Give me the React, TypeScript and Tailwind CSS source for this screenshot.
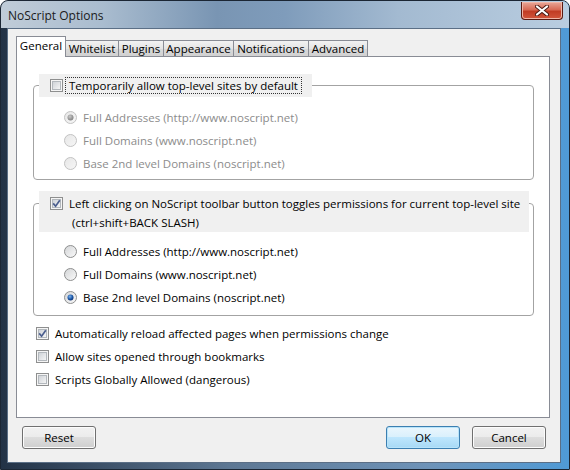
import { useId } from "react";

const font = "font-['Open_Sans',sans-serif]";

function CheckBox({ checked = false }: { checked?: boolean }) {
  const id = useId();
  return (
    <svg width="13" height="13" viewBox="0 0 13 13" className="shrink-0">
      <defs>
        <linearGradient id={id} x1="0" y1="0" x2="1" y2="1">
          <stop offset="0" stopColor="#cdd1d6" />
          <stop offset="1" stopColor="#f7f7f7" />
        </linearGradient>
      </defs>
      <rect x="0.5" y="0.5" width="12" height="12" fill="#f5f5f5" stroke="#8e8f8f" />
      <rect x="2.5" y="2.5" width="8" height="8" fill={`url(#${id})`} stroke="#b3b8bd" />
      {checked && <path d="M3.2 6.4 L5.6 9.2 L9.8 3.2" fill="none" stroke="#4b5e8e" strokeWidth="1.7" />}
    </svg>
  );
}

function Radio({ selected = false, disabled = false }: { selected?: boolean; disabled?: boolean }) {
  const id = useId();
  return (
    <svg width="13" height="13" viewBox="0 0 13 13" className="shrink-0">
      <defs>
        <linearGradient id={`${id}a`} x1="0" y1="0" x2="1" y2="1">
          <stop offset="0" stopColor={disabled ? "#e6e6e6" : "#d2d4d6"} />
          <stop offset="1" stopColor={disabled ? "#f7f7f7" : "#fbfbfb"} />
        </linearGradient>
        <radialGradient id={`${id}b`} cx="0.4" cy="0.35" r="0.7">
          <stop offset="0" stopColor={disabled ? "#c8c8c8" : "#7db2ea"} />
          <stop offset="0.6" stopColor={disabled ? "#9a9a9a" : "#1c58a8"} />
          <stop offset="1" stopColor={disabled ? "#808080" : "#0b2d6a"} />
        </radialGradient>
      </defs>
      <circle cx="6.5" cy="6.5" r="6" fill={`url(#${id}a)`} stroke={disabled ? "#c2c2c2" : "#8e8f8f"} />
      {selected && <circle cx="6.5" cy="6.5" r="3" fill={`url(#${id}b)`} />}
    </svg>
  );
}

function RadioRow({ label, selected, disabled }: { label: string; selected?: boolean; disabled?: boolean }) {
  return (
    <div className="flex h-[23px] items-center gap-[6px] pl-[30px]">
      <Radio selected={selected} disabled={disabled} />
      <span className={disabled ? "text-[#8c8c8c]" : "text-black"}>{label}</span>
    </div>
  );
}

function CheckRow({ label, checked }: { label: string; checked?: boolean }) {
  return (
    <div className="flex h-[23px] items-center gap-[6px] pl-[19px]">
      <CheckBox checked={checked} />
      <span>{label}</span>
    </div>
  );
}

function Button({ label, primary }: { label: string; primary?: boolean }) {
  return (
    <button
      type="button"
      className={`h-[23px] w-[74px] rounded-[3px] border text-black ${
        primary
          ? "border-[#3c7fb1] bg-[linear-gradient(#eaf6fd_0%,#d9f0fc_50%,#bee6fd_50%,#a7d9f5_100%)] shadow-[inset_0_0_0_1px_#b8e4fa]"
          : "border-[#707070] bg-[linear-gradient(#f2f2f2_0%,#ebebeb_50%,#dddddd_50%,#cfcfcf_100%)] shadow-[inset_0_0_0_1px_#fcfcfc]"
      }`}
    >
      {label}
    </button>
  );
}

const tabs = [
  { name: "General", w: "w-[50px]" },
  { name: "Whitelist", w: "w-[54px]" },
  { name: "Plugins", w: "w-[46px]" },
  { name: "Appearance", w: "w-[71px]" },
  { name: "Notifications", w: "w-[76px]" },
  { name: "Advanced", w: "w-[60px]" },
];

export default function App() {
  return (
    <div className={`${font} text-[11.5px] leading-none text-black`}>
      <div className="flex h-[470px] w-[570px] flex-col overflow-hidden rounded-t-[8px] border border-[#1b2634] bg-[linear-gradient(90deg,#223246_0%,#5d7793_40%,#6e93b8_75%,#4f9ad6_100%)]">
        <div className="flex h-[27px] shrink-0 items-center justify-between bg-[linear-gradient(90deg,#c0ccd8_0%,#a9bccf_18%,#7995b3_38%,#7f9cbb_50%,#a3bad1_70%,#b9cde0_100%)] pl-[7px] pr-[6px]">
          <span className="pt-[2px] text-[12px] text-[#1a1a1a]">NoScript Options</span>
          <div className="mb-[7px] flex h-[18px] w-[42px] items-center justify-center rounded-b-[4px] border border-t-0 border-[#5a1a12] bg-[linear-gradient(#e9a899_0%,#d86a55_45%,#c13c24_55%,#d2563c_100%)] shadow-[inset_0_0_0_1px_#f0b6a8]">
            <svg width="14" height="11" viewBox="0 0 14 11">
              <path d="M2 1.5 L12 9.5 M12 1.5 L2 9.5" stroke="#4a1a14" strokeWidth="4" strokeLinecap="round" />
              <path d="M2 1.5 L12 9.5 M12 1.5 L2 9.5" stroke="#ffffff" strokeWidth="2.2" strokeLinecap="round" />
            </svg>
          </div>
        </div>
        <div className="flex flex-1 px-[6px] pb-[6px] pr-[8px]">
          <div className="flex flex-1 flex-col border border-[#5b6f86] bg-[#f0f0f0] pl-[8px] pr-[10px] pt-[7px]">
            <div className="flex h-[21px] items-end">
              {tabs.map((t, i) =>
                i === 0 ? (
                  <div
                    key={t.name}
                    className={`relative z-10 flex h-[21px] ${t.w} items-center justify-center border border-b-0 border-[#898c95] bg-white pb-[2px]`}
                  >
                    {t.name}
                  </div>
                ) : (
                  <div
                    key={t.name}
                    className={`flex h-[17px] ${t.w} -ml-px items-center justify-center border border-b-0 border-[#898c95] bg-[linear-gradient(#f2f2f2,#e3e3e3_50%,#d9d9d9_50%,#d0d0d0)] pb-[1px] pt-[1px]`}
                  >
                    {t.name}
                  </div>
                )
              )}
            </div>
            <div className="-mt-px flex h-[362px] flex-col border border-[#898c95] bg-white pl-[16px] pr-[15px] pt-[28px]">
              <div className="flex flex-col rounded-[4px] border border-[#a3a3a3] pb-[4px]">
                <div className="-mt-[12px] ml-[5px] flex h-[23px] items-center self-start bg-[#f0f0f0] pl-[11px] pr-[10px]">
                  <CheckBox />
                  <span className="ml-[2px] border border-dotted border-[#333] px-[3px] py-[2px]">
                    Temporarily allow top-level sites by default
                  </span>
                </div>
                <div className="mt-[9px]">
                  <RadioRow label="Full Addresses (http://www.noscript.net)" selected disabled />
                  <RadioRow label="Full Domains (www.noscript.net)" disabled />
                  <RadioRow label="Base 2nd level Domains (noscript.net)" disabled />
                </div>
              </div>
              <div className="mt-[23px] flex flex-col rounded-[4px] border border-[#a3a3a3] pb-[6px]">
                <div className="-mt-[13px] ml-[5px] mr-[4px] flex items-start bg-[#f0f0f0] pl-[11px] pt-[3px]">
                  <div className="mt-[3px]">
                    <CheckBox checked />
                  </div>
                  <div className="ml-[6px] flex flex-col leading-[19px]">
                    <span>Left clicking on NoScript toolbar button toggles permissions for current top-level site</span>
                    <span className="pl-[3px]">(ctrl+shift+BACK SLASH)</span>
                  </div>
                </div>
                <div className="mt-[8px]">
                  <RadioRow label="Full Addresses (http://www.noscript.net)" />
                  <RadioRow label="Full Domains (www.noscript.net)" />
                  <RadioRow label="Base 2nd level Domains (noscript.net)" selected />
                </div>
              </div>
              <div className="-ml-[16px] mt-[6px]">
                <CheckRow label="Automatically reload affected pages when permissions change" checked />
                <CheckRow label="Allow sites opened through bookmarks" />
                <CheckRow label="Scripts Globally Allowed (dangerous)" />
              </div>
            </div>
            <div className="mt-[8px] flex items-center pl-[6px] pr-[4px]">
              <Button label="Reset" />
              <div className="flex-1" />
              <Button label="OK" primary />
              <div className="w-[12px]" />
              <Button label="Cancel" />
            </div>
          </div>
        </div>
      </div>
    </div>
  );
}
